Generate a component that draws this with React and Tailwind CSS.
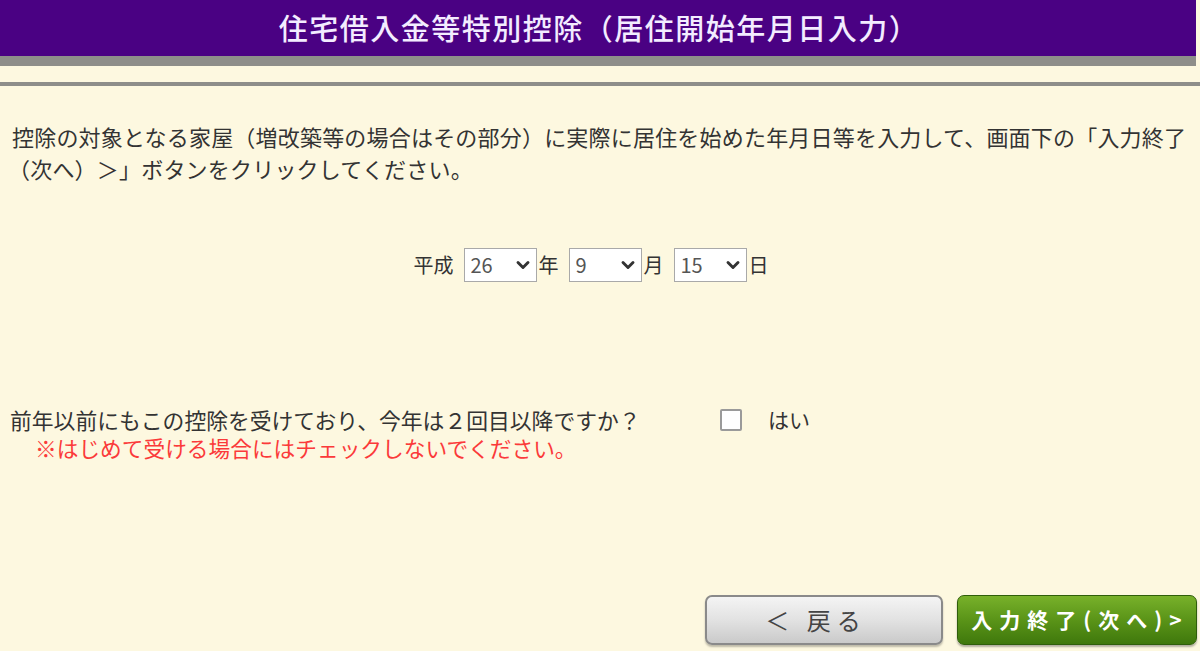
import React, { useState } from 'react'
import { ChevronDown } from 'lucide-react'

const jp = { fontFamily: '"Noto Sans CJK JP", "Noto Sans", sans-serif' }

function DateSelect({ value, options, onChange }) {
  return (
    <div className="relative">
      <select
        value={value}
        onChange={(e) => onChange(e.target.value)}
        className="appearance-none w-[73px] h-[34px] pl-[6px] bg-white border border-[#a9a9a9] text-[20px] text-[#555] outline-none"
        style={jp}
      >
        {options.map((o) => (
          <option key={o} value={o}>{o}</option>
        ))}
      </select>
      <ChevronDown
        className="absolute right-[4px] top-[7px] h-[20px] w-[20px] text-[#333] pointer-events-none"
        strokeWidth={3.5}
      />
    </div>
  )
}

function App() {
  const [date, setDate] = useState({ year: "26", month: "9", day: "15" })
  const [second, setSecond] = useState(false)

  const years = Array.from({ length: 31 }, (_, i) => String(i + 1))
  const months = Array.from({ length: 12 }, (_, i) => String(i + 1))
  const days = Array.from({ length: 31 }, (_, i) => String(i + 1))

  return (
    <div className="w-[1200px] h-[651px] bg-[#fdf8e0] overflow-hidden" style={jp}>
      {/* title bar */}
      <div className="w-[1196px] h-[56px] bg-[#4a0183] flex items-center justify-center">
        <h1 className="text-[29px] text-[#f3ecff] font-medium tracking-[1.5px] pl-[2px]">
          住宅借入金等特別控除（居住開始年月日入力）
        </h1>
      </div>
      <div className="w-[1196px] h-[10px] bg-[#8e8e8a]" />
      <div className="h-[16px]" />
      <div className="h-[4px] bg-[#8e8e8a]" />

      {/* instructions */}
      <div className="mt-[34px] text-[22px] tracking-[0.2px] leading-[32px] text-[#333]">
        <p className="pl-[12px]">
          控除の対象となる家屋（増改築等の場合はその部分）に実際に居住を始めた年月日等を入力して、画面下の「入力終了
        </p>
        <p className="pl-[8px]">（次へ）＞」ボタンをクリックしてください。</p>
      </div>

      {/* date of residence */}
      <div className="mt-[64px] flex items-center justify-center gap-[2px] text-[20px] text-[#333] pr-[18px]">
        <span className="mr-[8px]">平成</span>
        <DateSelect value={date.year} options={years} onChange={(v) => setDate({ ...date, year: v })} />
        <span className="mr-[8px]">年</span>
        <DateSelect value={date.month} options={months} onChange={(v) => setDate({ ...date, month: v })} />
        <span className="mr-[8px]">月</span>
        <DateSelect value={date.day} options={days} onChange={(v) => setDate({ ...date, day: v })} />
        <span>日</span>
      </div>

      {/* second year question */}
      <div className="mt-[124px] pl-[10px]">
        <div className="flex items-center h-[28px]">
          <span className="w-[710px] text-[21.8px] text-[#333]">
            前年以前にもこの控除を受けており、今年は２回目以降ですか？
          </span>
          <label className="flex items-center cursor-pointer">
            <input
              type="checkbox"
              checked={second}
              onChange={(e) => setSecond(e.target.checked)}
              className="appearance-none w-[22px] h-[22px] bg-white border-2 border-[#9a9a9a] rounded-[2px]"
            />
            <span className="ml-[26px] text-[21px] text-[#333]">はい</span>
          </label>
        </div>
        <p className="pl-[25px] text-[21.7px] leading-[28px] text-[#fb3a3a]">
          ※はじめて受ける場合にはチェックしないでください。
        </p>
      </div>

      {/* navigation */}
      <div className="mt-[133px] flex justify-end gap-[14px] pr-[3px]">
        <button className="w-[238px] h-[50px] pr-[16px] rounded-[7px] border-2 border-[#8a8a8a] bg-gradient-to-b from-[#f4f4f4] via-[#e2e2e2] to-[#cacaca] text-[#444] text-[24px] tracking-[6px] shadow-[0_2px_2px_rgba(0,0,0,0.25)]">
          ＜ 戻る
        </button>
        <button className="w-[240px] h-[50px] pl-[6px] rounded-[7px] border border-[#2f5e0a] bg-gradient-to-b from-[#78b12a] via-[#5a9418] to-[#3f780c] text-white text-[21px] font-bold tracking-[7px] shadow-[0_2px_2px_rgba(0,0,0,0.3)]">
          入力終了(次へ)&gt;
        </button>
      </div>
    </div>
  )
}

export default App
